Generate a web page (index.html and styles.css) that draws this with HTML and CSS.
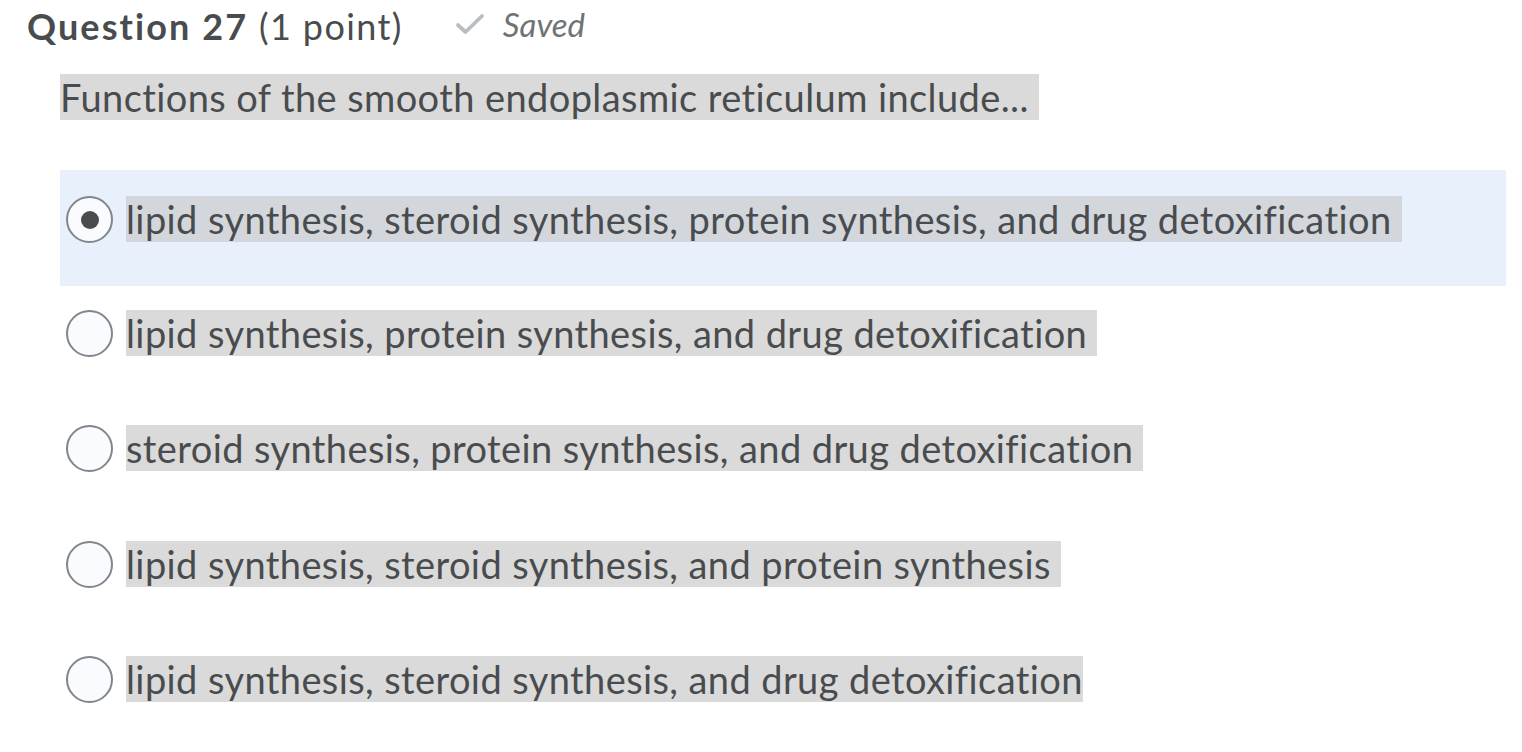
FILE: index.html
```html
<!DOCTYPE html>
<html lang="en">
<head>
<meta charset="utf-8">
<title>Question 27</title>
<link rel="stylesheet" href="styles.css">
</head>
<body>
<div class="quiz">
  <div class="q-header">
    <h2 class="q-title"><strong>Question 27</strong> (1 point)</h2>
    <span class="saved">
      <svg class="check" viewBox="0 0 30 22" width="30" height="22" aria-hidden="true"><path d="M3 12 L10.5 19 L27 3" fill="none" stroke="#b9bec2" stroke-width="3.8" stroke-linecap="round" stroke-linejoin="round"/></svg>
      <em>Saved</em>
    </span>
  </div>
  <p class="q-text"><span class="hl">Functions of the smooth endoplasmic reticulum include...&nbsp;</span></p>
  <div class="options">
    <label class="option selected">
      <span class="radio checked"></span>
      <span class="hl">lipid synthesis, steroid synthesis, protein synthesis, and drug detoxification&nbsp;</span>
    </label>
    <label class="option">
      <span class="radio"></span>
      <span class="hl">lipid synthesis, protein synthesis, and drug detoxification&nbsp;</span>
    </label>
    <label class="option">
      <span class="radio"></span>
      <span class="hl">steroid synthesis, protein synthesis, and drug detoxification&nbsp;</span>
    </label>
    <label class="option">
      <span class="radio"></span>
      <span class="hl">lipid synthesis, steroid synthesis, and protein synthesis&nbsp;</span>
    </label>
    <label class="option">
      <span class="radio"></span>
      <span class="hl">lipid synthesis, steroid synthesis, and drug detoxification</span>
    </label>
  </div>
</div>
</body>
</html>
```
FILE: styles.css
```css
html, body {
  margin: 0;
  padding: 0;
  background: #ffffff;
}
body {
  font-family: Lato, "Open Sans", sans-serif;
  color: #494c4e;
  font-variant-ligatures: none;
  font-feature-settings: "liga" 0, "clig" 0;
}
.quiz {
  padding: 0 16px 0 0;
}
.q-header {
  display: flex;
  align-items: center;
  gap: 52px;
  padding: 4px 0 0 27px;
  height: 44px;
}
.q-title {
  margin: 0;
  font-size: 36px;
  font-weight: 400;
  line-height: 40px;
  letter-spacing: 1.4px;
}
.q-title strong {
  font-weight: 700;
  letter-spacing: 2.1px;
}
.saved {
  display: flex;
  align-items: center;
  gap: 18px;
  color: #6e7376;
  font-size: 33px;
  line-height: 40px;
  margin-top: -4px;
}
.saved em {
  font-style: italic;
}
.check {
  display: block;
}
.q-text {
  margin: 26px 0 0 60px;
  font-size: 38px;
  line-height: 46px;
  letter-spacing: 0.4px;
}
.hl {
  background: #dadada;
}
.options {
  margin: 50px 0 0 60px;
  width: 1446px;
  display: flex;
  flex-direction: column;
}
.option {
  box-sizing: border-box;
  display: flex;
  align-items: flex-start;
  height: 115.33px;
  padding: 24px 0 0 6px;
  font-size: 38px;
  line-height: 46px;
  letter-spacing: 0.4px;
  gap: 13px;
}
.option.selected {
  background: #e8f0fb;
  height: 116px;
  padding-top: 26px;
}
.option.selected .hl {
  background: #d3d7dc;
}
.radio {
  box-sizing: border-box;
  width: 47px;
  height: 47px;
  flex: none;
  border-radius: 50%;
  border: 2px solid #80868a;
  background: #f9fbff;
  display: flex;
  align-items: center;
  justify-content: center;
}
.radio.checked::after {
  content: "";
  width: 18px;
  height: 18px;
  border-radius: 50%;
  background: #494c4e;
}
```
